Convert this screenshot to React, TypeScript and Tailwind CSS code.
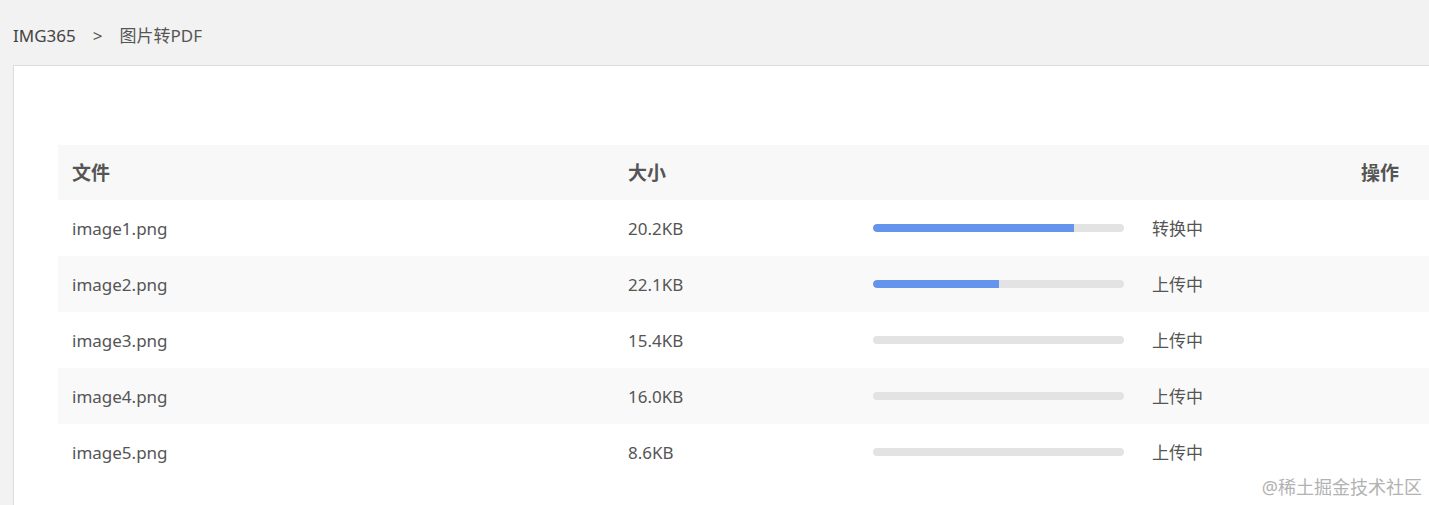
import React from 'react';

type FileRow = { name: string; size: string; progress: number; status: string };

const rows: FileRow[] = [
  { name: 'image1.png', size: '20.2KB', progress: 80, status: '转换中' },
  { name: 'image2.png', size: '22.1KB', progress: 50, status: '上传中' },
  { name: 'image3.png', size: '15.4KB', progress: 0, status: '上传中' },
  { name: 'image4.png', size: '16.0KB', progress: 0, status: '上传中' },
  { name: 'image5.png', size: '8.6KB', progress: 0, status: '上传中' },
];

const font = { fontFamily: '"Noto Sans", "Noto Sans CJK SC", sans-serif' };

export default function App() {
  return (
    <div className="relative h-[505px] w-[1429px] overflow-hidden bg-[#f2f2f2] text-[#555]" style={font}>
      {/* breadcrumb */}
      <div className="flex h-[65px] items-center pl-[13px] pt-[6px] text-[17px] text-[#444]">
        <span>IMG365</span>
        <span className="mx-[17px] text-[#555]">&gt;</span>
        <span className="text-[#555]">图片转PDF</span>
      </div>

      {/* panel */}
      <div className="ml-[13px] h-[440px] border-l border-t border-[#dcdcdc] bg-white pl-[44px] pt-[79px]">
        <div className="w-[1371px]">
          <div className="flex h-[55px] items-center bg-[#f8f8f8] pt-[2px] text-[19px] font-bold text-[#555]">
            <div className="w-[556px] pl-[14px]">文件</div>
            <div className="w-[245px] pl-[14px]">大小</div>
            <div className="flex-1 pr-[30px] text-right">操作</div>
          </div>
          {rows.map((r, i) => (
            <div
              key={r.name}
              className={`flex h-[56px] items-center text-[17px] text-[#555] ${i % 2 === 1 ? 'bg-[#f9f9f9]' : 'bg-white'}`}
            >
              <div className="w-[556px] pl-[14px] pt-[2px]">{r.name}</div>
              <div className="w-[245px] pl-[14px] pt-[2px]">{r.size}</div>
              <div className="flex items-center pl-[14px]">
                <div className="h-[8px] w-[251px] overflow-hidden rounded-full bg-[#e3e3e3]">
                  <div className="h-full rounded-l-full bg-[#6494ee]" style={{ width: `${r.progress}%` }} />
                </div>
                <span className="ml-[28px] pt-[2px]">{r.status}</span>
              </div>
            </div>
          ))}
        </div>
      </div>

      {/* watermark */}
      <div className="absolute bottom-[4px] right-[7px] text-[18px] text-[#b2b2b2]">@稀土掘金技术社区</div>
    </div>
  );
}
